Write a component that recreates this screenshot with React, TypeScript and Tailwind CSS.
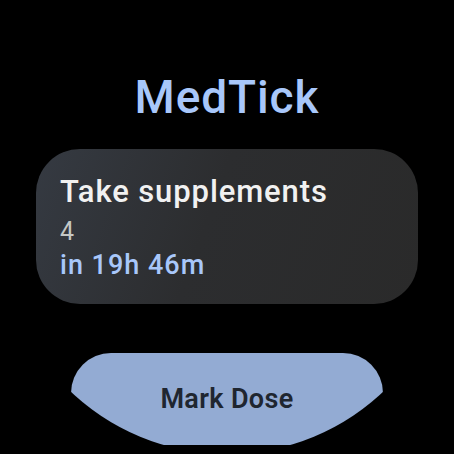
import React from "react";

export default function App() {
  return (
    <div className="w-[454px] h-[454px] bg-black">
      <div
        className="w-[454px] h-[454px] rounded-full overflow-hidden bg-black flex flex-col items-center"
        style={{ fontFamily: "Roboto, 'Noto Sans', sans-serif" }}
      >
        <div className="mt-[74px] h-[46px] leading-[46px] text-[46px] font-medium text-[#a8c7fa] tracking-[0.9px]">
          MedTick
        </div>
        <div className="mt-[29px] w-[382px] h-[155px] rounded-[44px] bg-[linear-gradient(110deg,#353a42_0%,#2c2d2f_45%,#2a2a2a_100%)] pl-[24px] pt-[24px] flex flex-col">
          <div className="text-[31px] leading-[38px] font-medium text-[#f1f1f1] tracking-[0.9px]">
            Take supplements
          </div>
          <div className="text-[25px] leading-[42px] text-[#c4c7c5]">4</div>
          <div className="text-[27px] leading-[24px] font-medium text-[#a8c7fa] tracking-[1px]">
            in 19h 46m
          </div>
        </div>
        <div className="mt-[49px] w-[312px] h-[92px] rounded-[40px] bg-[#93abd3] flex items-center justify-center shrink-0">
          <span className="text-[27px] font-semibold text-[#1f2630] tracking-[0.35px]">Mark Dose</span>
        </div>
      </div>
    </div>
  );
}
